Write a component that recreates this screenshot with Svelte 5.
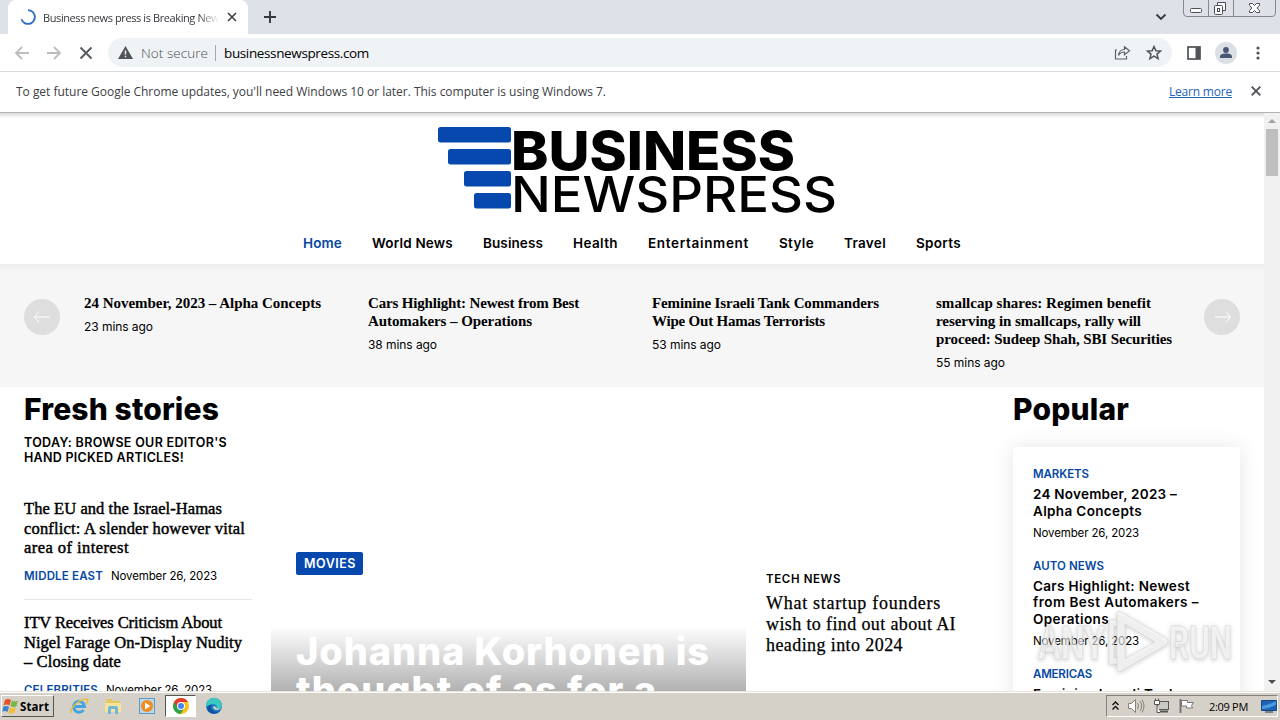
<script>
  // Tracks a line of text out or in so that it occupies the given width.
  function fit(node, width) {
    const count = node.textContent.length;
    const natural = node.getBoundingClientRect().width;
    node.style.letterSpacing = (width - natural) / count + 'px';
  }

  const nav = [
    ['Home', 39], ['World News', 81], ['Business', 60], ['Health', 45],
    ['Entertainment', 101], ['Style', 35], ['Travel', 42], ['Sports', 45]
  ];
  const ticker = [
    { lines: [['24 November, 2023 – Alpha Concepts', 237]], ago: '23 mins ago' },
    { lines: [['Cars Highlight: Newest from Best', 211], ['Automakers – Operations', 164]], ago: '38 mins ago' },
    { lines: [['Feminine Israeli Tank Commanders', 227], ['Wipe Out Hamas Terrorists', 173]], ago: '53 mins ago' },
    { lines: [['smallcap shares: Regimen benefit', 215], ['reserving in smallcaps, rally will', 205], ['proceed: Sudeep Shah, SBI Securities', 236]], ago: '55 mins ago' }
  ];
  const fresh = [
    { lines: [['The EU and the Israel-Hamas', 198], ['conflict: A slender however vital', 221], ['area of interest', 105]], tag: ['MIDDLE EAST', 79] },
    { lines: [['ITV Receives Criticism About', 198], ['Nigel Farage On-Display Nudity', 218], ['– Closing date', 97]], tag: ['CELEBRITIES', 74] }
  ];
  const popular = [
    { tag: ['MARKETS', 56], lines: [['24 November, 2023 –', 144], ['Alpha Concepts', 109]] },
    { tag: ['AUTO NEWS', 71], lines: [['Cars Highlight: Newest', 157], ['from Best Automakers –', 166], ['Operations', 76]] },
    { tag: ['AMERICAS', 59], lines: [['Feminine Israeli Tank', 144], ['Commanders Wipe Out', 150]] }
  ];
</script>

{#snippet rows(lines)}
  {#each lines as [text, w]}
    <div class="row"><span use:fit={w}>{text}</span></div>
  {/each}
{/snippet}

<div class="screen">
  <div class="tabs">
    <div class="tab">
      <svg width="16" height="16" viewBox="0 0 16 16" fill="none" stroke="#2f6fc4" stroke-width="1.9"><path d="M8 1.1A6.9 6.9 0 1 1 1.5 10.3" /></svg>
      <div class="tabtitle"><span use:fit={181}>Business news press is Breaking News</span></div>
      <svg width="10" height="10" viewBox="0 0 10 10" stroke="#3c4043" stroke-width="1.6"><path d="M1 1l8 8M9 1L1 9" /></svg>
    </div>
    <svg class="plus" width="12" height="12" viewBox="0 0 12 12" stroke="#35383d" stroke-width="1.9"><path d="M6 0v12M0 6h12" /></svg>
    <svg class="chev" width="12" height="8" viewBox="0 0 12 8" fill="none" stroke="#35383d" stroke-width="1.8"><path d="M1.5 1.5L6 6l4.500-4.500" /></svg>
    <svg class="winbtns" width="94" height="18" viewBox="0 0 94 18" fill="none" stroke="#84888f">
      <path d="M.5 0v13q0 3.500 3.500 3.500h85q3.500 0 3.500-3.500V0M25.500 0v16.500M50.500 0v16.500" />
      <g stroke="#4b4f56"><rect x="7.500" y="8.500" width="11" height="4" rx="1" fill="#fafafa" />
        <path d="M34.500 5.500v-3h8v8h-3" fill="#f6f7f8" /><rect x="31.500" y="5.500" width="8" height="9" rx="1" fill="#fafafa" /><rect x="34.500" y="8.500" width="2" height="3" />
        <path d="M66.500 3.500h3l2 2 2-2h3v2l-2.500 2.500 2.500 2.500v2h-3l-2-2-2 2h-3v-2L69 8l-2.500-2.500z" fill="#fafafa" /></g>
    </svg>
  </div>

  <div class="toolbar">
    <svg width="16" height="14" viewBox="0 0 16 14" fill="none" stroke="#babcbe" stroke-width="1.8"><path d="M15 7H2M8 1L2 7l6 6" /></svg>
    <svg width="16" height="14" viewBox="0 0 16 14" fill="none" stroke="#babcbe" stroke-width="1.8"><path d="M1 7h13M8 1l6 6-6 6" /></svg>
    <svg width="14" height="14" viewBox="0 0 14 14" stroke="#55585c" stroke-width="1.9"><path d="M1.500 1.500l11 11M12.500 1.500l-11 11" /></svg>
    <div class="omni">
      <svg width="15" height="13" viewBox="0 0 15 13"><path d="M7.500 0L15 13H0z" fill="#505357" /><path d="M7.500 4.500v4M7.500 9.700v1.500" stroke="#f1f3f4" stroke-width="1.500" /></svg>
      <span class="insecure"><span use:fit={67}>Not secure</span></span>
      <i></i>
      <span class="url"><span use:fit={145}>businessnewspress.com</span></span>
      <svg class="share" width="17" height="15" viewBox="0 0 17 15" fill="none" stroke="#5f6368" stroke-width="1.200"><path d="M3 5H1.500v9h11v-3M4.500 10.500c.5-4 3-6 6-6V1.700l5 4.100-5 3.900V7c-3 0-4.500 1-6 3.500z" /></svg>
      <svg width="16" height="15" viewBox="0 0 16 15" fill="none" stroke="#505357" stroke-width="1.500"><path d="M8 1.500l1.900 4.200 4.600.4-3.500 3 1.100 4.500L8 11.200l-4.100 2.400L5 9.100l-3.500-3 4.600-.4z" /></svg>
    </div>
    <svg class="panel" width="14" height="14" viewBox="0 0 14 14"><rect x="1" y="1" width="12" height="12" fill="none" stroke="#505357" stroke-width="1.700" /><path d="M8.500 1H13v12H8.500z" fill="#505357" /></svg>
    <svg class="user" width="22" height="22" viewBox="0 0 22 22"><circle cx="11" cy="11" r="11" fill="#dcdfe4" /><circle cx="11" cy="8" r="2.900" fill="#485778" /><path d="M5 16v-1.500c0-2.500 3.500-3 6-3s6 .5 6 3V16z" fill="#485778" /></svg>
    <svg class="dots" width="4" height="14" viewBox="0 0 4 14" fill="#505357"><circle cx="2" cy="2" r="1.600" /><circle cx="2" cy="7" r="1.600" /><circle cx="2" cy="12" r="1.600" /></svg>
  </div>

  <div class="infobar">
    <span use:fit={590}>To get future Google Chrome updates, you'll need Windows 10 or later. This computer is using Windows 7.</span>
    <a href="#top"><span use:fit={63}>Learn more</span></a>
    <svg width="10" height="10" viewBox="0 0 10 10" stroke="#505357" stroke-width="1.900"><path d="M.7.700l8.600 8.600M9.300.700L.7 9.300" /></svg>
  </div>

  <div class="view">
    <div class="page">
      <header>
        <svg class="logo" width="400" height="90" viewBox="0 0 400 90">
          <g fill="#0648ae"><rect x="1" y="2" width="73" height="15.500" rx="2.500" /><rect x="11" y="24" width="63" height="15.500" rx="2.500" /><rect x="27" y="46" width="47" height="15.500" rx="2.500" /><rect x="37" y="68" width="37" height="15.500" rx="2.500" /></g>
          <text x="74" y="45" font-size="53.500" font-weight="800" textLength="284" lengthAdjust="spacingAndGlyphs">BUSINESS</text>
          <text x="74" y="87" font-size="49" font-weight="500" textLength="326" lengthAdjust="spacingAndGlyphs">NEWSPRESS</text>
        </svg>
        <nav>
          {#each nav as [name, w], i}
            <a href="#top" class:on={i === 0}><span use:fit={w}>{name}</span></a>
          {/each}
        </nav>
      </header>

      <section class="ticker">
        <svg width="36" height="36" viewBox="0 0 36 36"><circle cx="18" cy="18" r="18" fill="#dedede" /><path d="M26 18H10.500M15 12.500L10.500 18l4.500 5.500" fill="none" stroke="#fff" stroke-width="1" /></svg>
        {#each ticker as item}
          <article>
            {@render rows(item.lines)}
            <div class="ago"><span use:fit={69}>{item.ago}</span></div>
          </article>
        {/each}
        <svg width="36" height="36" viewBox="0 0 36 36"><circle cx="18" cy="18" r="18" fill="#dedede" /><path d="M11 18h15.500M22 12.500l4.500 5.500-4.500 5.500" fill="none" stroke="#fff" stroke-width="1" /></svg>
      </section>

      <main>
        <section class="fresh">
          <h2><span use:fit={195}>Fresh stories</span></h2>
          <div class="sub">{@render rows([["TODAY: BROWSE OUR EDITOR'S", 203], ['HAND PICKED ARTICLES!', 160]])}</div>
          {#each fresh as item}
            <article>
              {@render rows(item.lines)}
              <div class="meta"><b><span use:fit={item.tag[1]}>{item.tag[0]}</span></b><span use:fit={106}>November 26, 2023</span></div>
            </article>
          {/each}
        </section>

        <section class="hero">
          <div class="badge"><span use:fit={52}>MOVIES</span></div>
          <div class="shade">{@render rows([['Johanna Korhonen is', 414], ['thought of as for a', 361]])}</div>
        </section>

        <section class="tech">
          <div class="label"><span use:fit={75}>TECH NEWS</span></div>
          {@render rows([['What startup founders', 175], ['wish to find out about AI', 190], ['heading into 2024', 137]])}
        </section>

        <section class="popular">
          <h2><span use:fit={116}>Popular</span></h2>
          <div class="card">
            {#each popular as item}
              <article>
                <div class="tag"><span use:fit={item.tag[1]}>{item.tag[0]}</span></div>
                {@render rows(item.lines)}
                <div class="date"><span use:fit={106}>November 26, 2023</span></div>
              </article>
            {/each}
          </div>
        </section>
      </main>
    </div>
    <div class="scroll">
      <svg width="8" height="4" viewBox="0 0 8 4"><path d="M0 4l4-4 4 4z" fill="#a0a0a0" /></svg>
      <div class="thumb"></div>
      <svg width="8" height="4" viewBox="0 0 8 4"><path d="M0 0l4 4 4-4z" fill="#505050" /></svg>
    </div>
  </div>

  <svg class="mark" width="204" height="64" viewBox="0 0 204 64">
    <g fill="#fff" fill-opacity=".6" stroke="#d4d4d4" stroke-opacity=".6" stroke-width="1">
      <text x="5" y="48" textLength="67" lengthAdjust="spacingAndGlyphs">ANY</text>
      <path d="M76 9h8v6h-3v32h3v6h-8z" />
      <path fill-rule="evenodd" d="M88 1l45 26q4 4 0 7L88 60q-4 2-4-3V4q0-5 4-3zM92 13v35l30-17z" />
      <text x="136" y="48" textLength="63" lengthAdjust="spacingAndGlyphs">RUN</text>
    </g>
  </svg>

  <footer>
    <div class="start">
      <svg width="17" height="16" viewBox="0 0 17 16"><path d="M3 2q3-2 6 0L7.500 7.500q-3-2-6 0z" fill="#e5532d" /><path d="M10 2.500q3 2 6 0L14.500 8q-3 2-6 0z" fill="#7ab441" /><path d="M1 9q3-2 6 0l-1.500 5q-3-2-5 0z" fill="#3c83cb" /><path d="M8 9.500q3 2 6 0l-1.500 5q-3 2-6 0z" fill="#f5be31" /></svg>
      <span use:fit={29}>Start</span>
    </div>
    <div class="apps">
      <svg width="20" height="20" viewBox="0 0 20 20" fill="none"><path d="M14.500 14A5.500 5.500 0 1 1 15.500 10.500H6" stroke="#42a5df" stroke-width="3" /><path d="M2 17C0 12 12 2 18 3q2 1-1 5" stroke="#eabb3c" stroke-width="1.500" /></svg>
      <svg width="20" height="20" viewBox="0 0 20 20"><path d="M3 5V3h6l1 2h7v11H3z" fill="#e6c760" /><path d="M2 7h16v9H2z" fill="#f7e39a" /><path d="M5 18v-6q0-2 2-2h6q2 0 2 2v6h-3v-5H8v5z" fill="#73b7d8" /></svg>
      <svg width="20" height="20" viewBox="0 0 20 20"><rect x="2.500" y="2.500" width="15" height="15" fill="#b9d8ec" stroke="#5c9cc5" /><circle cx="10" cy="10" r="6" fill="#f48b21" /><path d="M8 6.500l5.500 3.500L8 13.500z" fill="#fff" /></svg>
      <div class="active">
        <svg width="18" height="18" viewBox="0 0 18 18"><circle cx="9" cy="9" r="8" fill="#fbc116" /><path d="M9 9L2.100 5A8 8 0 0 0 8.500 17l4-6z" fill="#2ba24c" /><path d="M2.100 5A8 8 0 0 1 16 5H9L5.500 11z" fill="#e33b2e" /><circle cx="9" cy="9" r="4" fill="#fff" /><circle cx="9" cy="9" r="3" fill="#4285f4" /></svg>
      </div>
      <svg width="18" height="18" viewBox="0 0 18 18"><circle cx="9" cy="9" r="8" fill="#1678c7" /><path d="M1 9A8 8 0 0 1 17 8.500c0 3-4 4-6 3 2-3-1-5-4-4S1.500 9 1 9z" fill="#3cc7c0" /><path d="M6 10c0 4 5 6 9 4A8 8 0 0 1 3 14C1 10 4 7.500 7 7.500Q6 8.500 6 10z" fill="#13539e" /><path d="M8 10.500c.5-1.500 2.500-2.500 2.500-.5 0 1.500 3 2.500 5.500.8-1 2.700-7 3.200-8-.3z" fill="#d5d1c9" /></svg>
    </div>
    <div class="tray">
      <svg width="7" height="10" viewBox="0 0 7 10" fill="none" stroke="#111" stroke-width="1.400"><path d="M.5 4l3-3 3 3M.5 8.500l3-3 3 3" /></svg>
      <svg width="18" height="16" viewBox="0 0 18 16" fill="none" stroke="#82817e"><path d="M1.500 5.500h3l4-4v13l-4-4h-3z" fill="#fff" /><path d="M10.500 5q2 3 0 6M13 3q3.500 5 0 10M15 1.500q4 6.500 0 13" /></svg>
      <svg width="17" height="16" viewBox="0 0 17 16" stroke="#575653"><rect x="4.500" y="3.500" width="11" height="8" fill="#c9c9c7" /><path d="M7 13.500h8" stroke-width="2" /><path d="M1.500 2.500h5v4h-5zM2.500.500v2M5.500.500v2M4 7v7.500h3" fill="#fff" /></svg>
      <svg width="17" height="16" viewBox="0 0 17 16" stroke="#777" fill="#fff"><path d="M2.500 1v14" stroke-width="2" /><path d="M3.500 2.500h6v2h6l-2 3 1 2.500h-6V8h-5z" /></svg>
      <span class="clock"><span use:fit={39}>2:09 PM</span></span>
      <svg class="desk" width="16" height="13" viewBox="0 0 16 13"><path d="M.5.500h15v10H.5z" fill="#1d62b6" stroke="#17457d" /><path d="M1 6q7-1 14-5v4Q9 8 1 9z" fill="#4a9ae2" /><path d="M4 12h8" stroke="#596b7e" stroke-width="1.500" /></svg>
    </div>
  </footer>
</div>

<style>
  :global(body) { margin: 0; overflow: hidden; }
  * { box-sizing: border-box; }
  svg { display: block; flex: none; overflow: visible; }
  span { white-space: pre; }
  a { color: inherit; text-decoration: none; }
  h2 { margin: 0; font-size: 30px; line-height: 36px; font-weight: 800; }
  .screen { position: relative; width: 1280px; height: 720px; display: flex; flex-direction: column; overflow: hidden; background: #fff; font-family: 'Open Sans', 'Noto Sans', sans-serif; color: #000; }

  .tabs { height: 34px; flex: none; background: #dee1e8; display: flex; padding-left: 8px; }
  .tab { width: 240px; background: #fff; border-radius: 8px 8px 0 0; display: flex; align-items: center; padding-left: 12px; font-size: 11px; color: #35383c; }
  .tabtitle { width: 176px; margin: 0 8px 0 7px; overflow: hidden; -webkit-mask-image: linear-gradient(90deg, #000 88%, transparent); mask-image: linear-gradient(90deg, #000 88%, transparent); }
  .plus { margin: 11px 0 0 16px; }
  .chev { margin: 13px 16px 0 auto; }
  .winbtns { margin-right: 3px; }

  .toolbar { height: 38px; flex: none; display: flex; align-items: center; padding: 0 20px 0 14px; border-bottom: 1px solid #d8dadd; }
  .toolbar > svg:nth-child(2) { margin-left: 16px; }
  .toolbar > svg:nth-child(3) { margin-left: 17px; }
  .omni { margin-left: 15px; width: 1064px; height: 29px; border-radius: 15px; background: #f0f3f5; display: flex; align-items: center; padding: 0 10px; font-size: 13.500px; font-weight: 300; }
  .insecure { margin-left: 8px; color: #4c4f53; width: 67px; }
  .omni i { width: 1px; height: 16px; background: #a5a8ac; margin: 0 8px 0 7px; }
  .url { color: #000; font-weight: 400; }
  .share { margin: 0 15px 0 auto; }
  .panel { margin-left: 15px; }
  .user { margin-left: 14px; }
  .dots { margin-left: auto; }

  .infobar { height: 41px; flex: none; display: flex; align-items: center; padding: 0 19px 2px 16px; font-size: 12px; color: #3c4043; border-bottom: 1px solid #b4b5b6; }
  .infobar a { margin: 0 19px 0 auto; color: #2463ba; text-decoration: underline; }

  .view { flex: 1; min-height: 0; display: flex; box-shadow: inset 0 5px 3px -2px #dedede; }
  .page { flex: 1; overflow: hidden; font-family: Inter, sans-serif; }
  header { height: 151px; padding-top: 12px; }
  .logo { margin: 0 0 0 437px; font-family: Inter, sans-serif; }
  nav { display: flex; gap: 30px; margin-left: 303px; padding-top: 18px; font-size: 13.500px; line-height: 20px; font-weight: 600; }
  .on { color: #0648a4; }

  .ticker { height: 123px; background: linear-gradient(#ededed, #f6f6f6 8px); display: flex; align-items: flex-start; padding: 30px 24px 0; }
  .ticker > svg { margin-top: 5px; }
  .ticker article { width: 284px; flex: none; font: 700 15px/18px 'Liberation Serif', serif; }
  .ticker article:nth-child(2) { margin-left: 24px; }
  .ticker article:nth-last-child(2) { width: 268px; margin-right: -16px; }
  .ticker > svg:last-child { margin-left: auto; }
  .ticker .ago { font: 400 12px/18px Inter, sans-serif; margin-top: 5.500px; }

  main { display: grid; grid-template-columns: 228px 475px 229px 227px; column-gap: 19px; padding-left: 24px; }
  .fresh h2, .popular h2 { padding-top: 4px; height: 48px; }
  .sub { font-size: 12.500px; line-height: 15px; font-weight: 600; }
  .fresh article { font: 400 16.500px/19.500px 'Liberation Serif', serif; -webkit-text-stroke: .45px #000; height: 114px; padding-top: 13px; border-top: 1px solid #e6e6e6; }
  .sub + article { margin-top: 20px; border-color: transparent !important; }
  .meta { font: 400 11.500px/18px Inter, sans-serif; -webkit-text-stroke: 0; display: flex; gap: 8px; margin-top: 9px; }
  .meta b { color: #0648a4; font-weight: 600; }

  .hero { display: flex; flex-direction: column; align-items: flex-start; padding-top: 165px; }
  .badge { margin-left: 25px; width: 67px; height: 23px; border-radius: 2px; background: #0648ae; color: #fff; font-size: 12.500px; line-height: 24px; font-weight: 600; padding-left: 8px; }
  .shade { width: 475px; height: 200px; margin-top: 51px; padding: 6px 25px; background: linear-gradient(rgba(0, 0, 0, 0), rgba(0, 0, 0, .31) 66px, rgba(0, 0, 0, .7)); color: #fff; font-size: 38px; line-height: 39px; font-weight: 800; }

  .tech { padding: 182px 0 0 1px; font: 400 18px/21px 'Liberation Serif', serif; -webkit-text-stroke: .25px #000; }
  .label { font: 600 11.500px/20px Inter, sans-serif; margin-bottom: 4px; -webkit-text-stroke: 0; }

  .card { margin-top: 12px; height: 320px; padding: 17px 20px; box-shadow: 0 0 20px rgba(0, 0, 0, .1); background: #fff; font-size: 13.500px; line-height: 16.500px; font-weight: 600; }
  .card article { margin-bottom: 12.500px; }
  .tag { color: #0648a4; font-size: 11.500px; line-height: 20px; margin-bottom: 2px; }
  .date { font-size: 11.500px; font-weight: 400; line-height: 20px; margin-top: 4px; }

  .scroll { width: 16px; background: #f1f1f1; display: flex; flex-direction: column; align-items: center; padding: 6px 0 7px; }
  .thumb { width: 12px; height: 47px; margin-top: 6px; background: #bfbfbf; }
  .scroll svg:last-child { margin-top: auto; }

  .mark { position: absolute; left: 1033px; top: 611px; font: 700 46px Roboto, sans-serif; filter: drop-shadow(0 1px 2px rgba(0, 0, 0, .28)); }

  footer { height: 29px; flex: none; background: #d5d1c9; border-top: 1px solid #e8e5df; box-shadow: inset 0 1px #fff; display: flex; align-items: center; }
  .start { width: 53px; height: 22px; margin-left: 1px; border: 1px solid #fff; border-right-color: #555; border-bottom-color: #555; display: flex; align-items: center; gap: 1px; font: 700 11.500px 'Open Sans', sans-serif; }
  .apps { display: flex; align-items: center; margin-left: 15px; gap: 14px; }
  .active { width: 31px; height: 22px; background: #fff; border: 1px solid #555; border-right-color: #fff; border-bottom-color: #fff; display: grid; place-items: center; margin: 0 -5px 0 -6px; }
  .tray { margin: 0 2px 0 auto; width: 172px; height: 22px; border: 1px solid #85817a; border-right-color: #fff; border-bottom-color: #fff; display: flex; align-items: center; padding-left: 5px; font-size: 11px; }
  .tray svg + svg { margin-left: 8px; }
  .clock { margin-left: 14px; }
  .desk { margin-left: auto; }
</style>
